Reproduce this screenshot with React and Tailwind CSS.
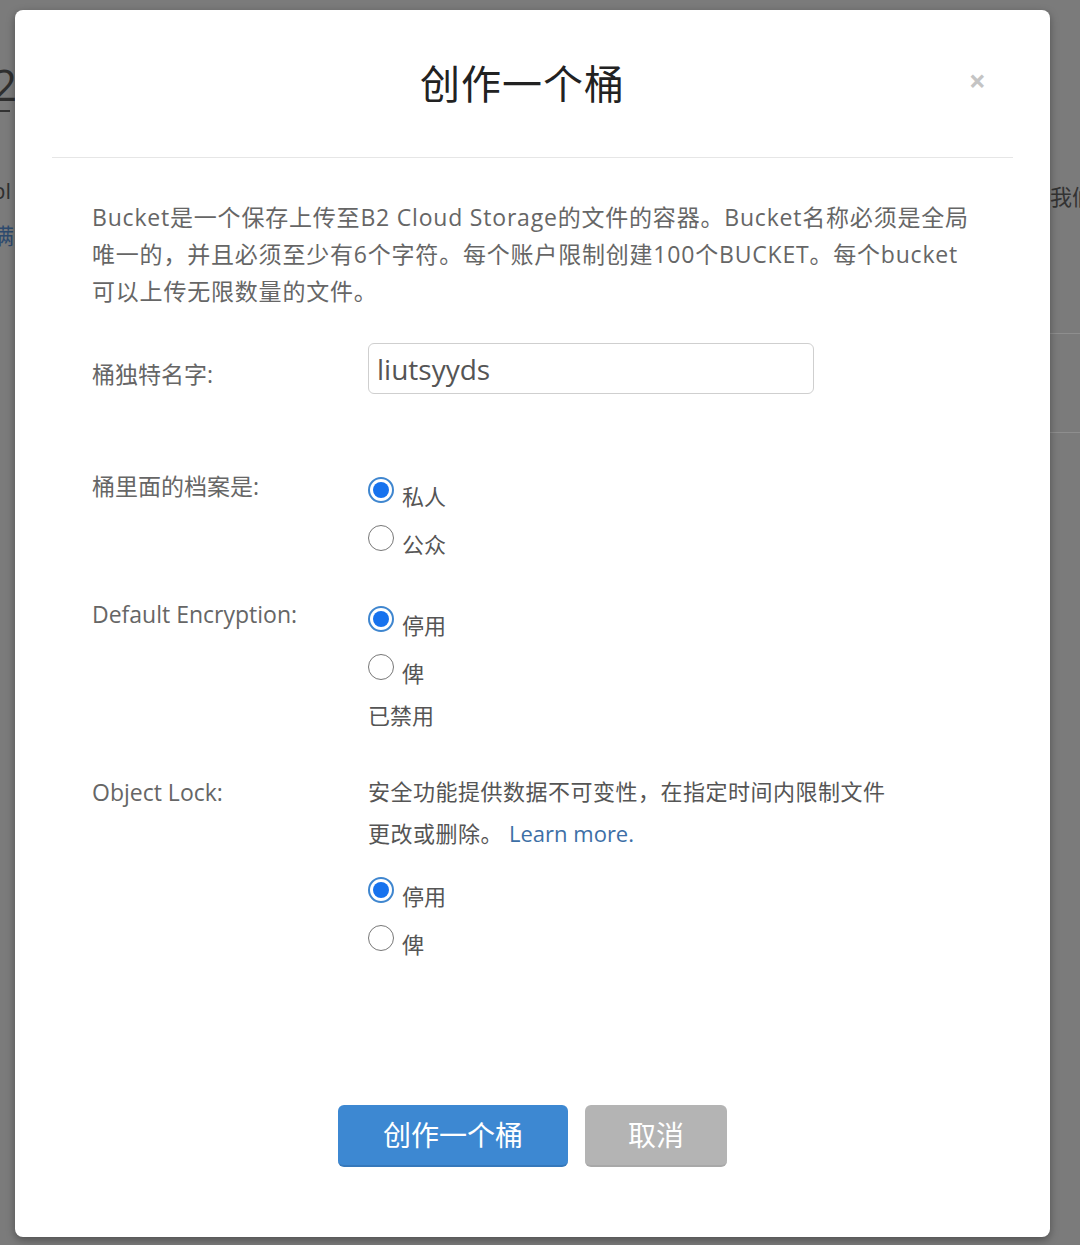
import { useState } from 'react';

const font = { fontFamily: '"Open Sans", "Noto Sans CJK SC", sans-serif' };

function Radio({ checked, label, onClick }) {
    return (
        <div className="flex h-[48px] cursor-pointer items-start" onClick={onClick}>
            {checked ? (
                <span className="mt-[11px] flex h-[26px] w-[26px] items-center justify-center rounded-full border-2 border-[#3f86cf] bg-white">
                    <span className="h-[16px] w-[16px] rounded-full bg-[#1672ee]" />
                </span>
            ) : (
                <span className="mt-[11px] h-[26px] w-[26px] rounded-full border-[1.5px] border-[#777] bg-white" />
            )}
            <span className="ml-[8px] mt-[15px] text-[22px] leading-[30px] text-[#555]">{label}</span>
        </div>
    );
}

export default function App() {
    const [name, setName] = useState('liutsyyds');
    const [access, setAccess] = useState('private');
    const [encryption, setEncryption] = useState('off');
    const [lock, setLock] = useState('off');

    return (
        <div className="relative h-[1245px] w-[1080px] overflow-hidden bg-[#7b7b7b]" style={font}>
            {/* page behind the overlay */}
            <div className="flex h-full justify-between text-[#2f2f2f]">
                <div className="-ml-[8px] flex flex-col">
                    <div className="mt-[58px] w-[18px] border-b-2 border-[#333] text-[44px] leading-[52px]">2</div>
                    <div className="mt-[62px] text-[22px]">bl</div>
                    <div className="mt-[12px] text-[22px] text-[#2d4a6e]">满</div>
                </div>
                <div className="flex w-[30px] flex-col">
                    <div className="mt-[180px] whitespace-nowrap text-[22px] text-[#333]">我们</div>
                    <div className="mt-[120px] border-t border-[#8e8e8e]" />
                    <div className="mt-[98px] border-t border-[#8e8e8e]" />
                </div>
            </div>

            {/* modal */}
            <div className="absolute left-[15px] top-[10px] w-[1035px] rounded-[8px] bg-white shadow-[0_3px_8px_rgba(0,0,0,0.35)]">
                <div className="relative mx-[37px] flex h-[148px] items-center justify-center border-b border-[#e6e6e6]">
                    <h1 className="mr-[20px] text-[40px] tracking-[1px] text-[#222]">创作一个桶</h1>
                    <button className="absolute right-[27px] top-[56px] text-[30px] font-bold leading-none text-[#c4c4c4]">×</button>
                </div>

                <div className="px-[77px] pt-[41px]">
                    <p className="whitespace-nowrap text-[23px] leading-[37px] tracking-[0.8px] text-[#666]">
                        Bucket是一个保存上传至B2 Cloud Storage的文件的容器。Bucket名称必须是全局<br />
                        唯一的，并且必须至少有6个字符。每个账户限制创建100个BUCKET。每个bucket<br />
                        可以上传无限数量的文件。
                    </p>

                    <div className="mt-[33px] flex">
                        <div className="w-[276px] pt-[13px] text-[23px] leading-[36px] text-[#666]">桶独特名字:</div>
                        <input
                            value={name}
                            onChange={e => setName(e.target.value)}
                            className="h-[51px] w-[446px] rounded-[6px] border border-[#cfcfcf] px-[8px] text-[28px] text-[#555] outline-none"
                        />
                    </div>

                    <div className="mt-[72px] flex">
                        <div className="w-[276px] pt-[2px] text-[23px] leading-[36px] text-[#666]">桶里面的档案是:</div>
                        <div className="flex flex-col">
                            <Radio checked={access === 'private'} label="私人" onClick={() => setAccess('private')} />
                            <Radio checked={access === 'public'} label="公众" onClick={() => setAccess('public')} />
                        </div>
                    </div>

                    <div className="mt-[33px] flex">
                        <div className="w-[276px] pt-[1px] text-[23px] leading-[36px] text-[#666]">Default Encryption:</div>
                        <div className="flex flex-col">
                            <Radio checked={encryption === 'off'} label="停用" onClick={() => setEncryption('off')} />
                            <Radio checked={encryption === 'on'} label="俾" onClick={() => setEncryption('on')} />
                            <div className="flex h-[48px] items-center text-[22px] text-[#555]">已禁用</div>
                        </div>
                    </div>

                    <div className="mt-[31px] flex">
                        <div className="w-[276px] pt-[4px] text-[23px] leading-[36px] text-[#666]">Object Lock:</div>
                        <div className="flex flex-col">
                            <p className="whitespace-nowrap text-[22px] leading-[42px] tracking-[0.5px] text-[#555]">
                                安全功能提供数据不可变性，在指定时间内限制文件<br />
                                更改或删除。<a href="#" className="ml-[6px] tracking-normal text-[#3d6fa6]">Learn more.</a>
                            </p>
                            <div className="mt-[12px] flex flex-col">
                                <Radio checked={lock === 'off'} label="停用" onClick={() => setLock('off')} />
                                <Radio checked={lock === 'on'} label="俾" onClick={() => setLock('on')} />
                            </div>
                        </div>
                    </div>
                </div>

                <div className="mt-[143px] flex justify-center gap-[17px] pb-[70px]">
                    <button className="h-[62px] w-[230px] rounded-[6px] border-b-2 border-[#3578bb] bg-[#3d88d2] text-[28px] text-white">创作一个桶</button>
                    <button className="h-[62px] w-[142px] rounded-[6px] border-b-2 border-[#a8a8a8] bg-[#b4b4b4] text-[28px] text-white">取消</button>
                </div>
            </div>
        </div>
    );
}
